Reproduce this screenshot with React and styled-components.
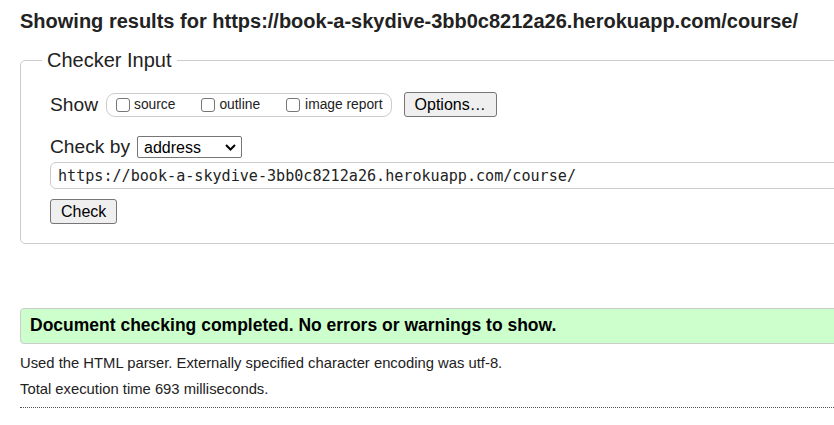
import React from 'react';
import styled, { createGlobalStyle } from 'styled-components';

const GlobalStyle = createGlobalStyle`
    html, body {
        margin: 0;
        padding: 0;
        background: #fff;
        overflow: hidden;
    }
    body {
        font-family: "Liberation Sans", Arial, sans-serif;
        color: #222;
    }
`;

const Page = styled.main`
    width: 1100px;
    padding: 9px 0 0 20px;
`;

const Heading = styled.h2`
    margin: 0;
    font-size: 20px;
    line-height: 24px;
    font-weight: bold;
`;

const Fieldset = styled.fieldset`
    margin: 15px 0 0 0;
    padding: 0 0 0 21px;
    border: 1px solid #ccc;
    border-radius: 5px;
    min-width: 0;
`;

const Legend = styled.legend`
    padding: 0 5px;
    font-size: 20px;
    line-height: 24px;
`;

const FieldsetBody = styled.div`
    padding: 20px 0 19px 8px;
`;

const Row = styled.div`
    display: flex;
    align-items: center;
    height: ${p => p.$h}px;
    margin-top: ${p => p.$top || 0}px;
`;

const Label = styled.span`
    font-size: 19.2px;
    line-height: ${p => p.$h}px;
    margin-right: ${p => p.$gap}px;
`;

const OptionGroup = styled.div`
    display: flex;
    align-items: center;
    gap: 26px;
    height: 22px;
    padding: 0 8px 0 9px;
    border: 1px solid #ccc;
    border-radius: 9px;
`;

const Option = styled.label`
    display: flex;
    align-items: center;
    gap: ${p => p.$gap}px;
    font-size: 13.8px;
    line-height: 16px;
`;

const Box = styled.input`
    appearance: none;
    margin: 0;
    width: 14px;
    height: 14px;
    border: 1px solid #767676;
    border-radius: 3px;
    background: #fff;
    box-sizing: border-box;
`;

const Button = styled.button`
    height: 25px;
    margin-left: ${p => p.$left || 0}px;
    margin-top: ${p => p.$top || 0}px;
    padding: 0 10px;
    font-family: "Liberation Sans", Arial, sans-serif;
    font-size: 16px;
    color: #000;
    background: #efefef;
    border: 1px solid #767676;
    border-radius: 3px;
    display: block;
`;

const SelectWrap = styled.div`
    position: relative;
    width: 105px;
    height: 22px;
`;

const Select = styled.select`
    appearance: none;
    width: 100%;
    height: 100%;
    margin: 0;
    padding: 0 0 0 6px;
    box-sizing: border-box;
    font-family: "Liberation Sans", Arial, sans-serif;
    font-size: 16px;
    color: #000;
    background: #fff;
    border: 1px solid #767676;
    border-radius: 2px;
`;

const Chevron = styled.svg`
    position: absolute;
    left: 88px;
    top: 8px;
    pointer-events: none;
`;

const UrlInput = styled.input`
    display: block;
    box-sizing: border-box;
    width: 1000px;
    height: 27px;
    margin: 4px 0 0 0;
    padding: 0 0 0 7px;
    font-family: "DejaVu Sans Mono", "Liberation Mono", monospace;
    font-size: 15.1px;
    color: #222;
    background: #fff;
    border: 1px solid #ccc;
    border-radius: 6px;
    outline: none;
`;

const Success = styled.div`
    display: flex;
    align-items: center;
    box-sizing: border-box;
    height: 36px;
    margin-top: 64px;
    padding: 0 8px 2px 9px;
    background: #ccffcc;
    border: 1px solid #ccc;
    border-radius: 4px;
    font-size: 17.5px;
    font-weight: bold;
    color: #000;
`;

const Detail = styled.p`
    margin: ${p => p.$top}px 0 0 0;
    font-size: 14.8px;
    line-height: 16px;
`;

const Rule = styled.hr`
    margin: 10px 0 0 0;
    border: 0;
    border-top: 1px dotted #555;
    height: 0;
`;

const url = 'https://book-a-skydive-3bb0c8212a26.herokuapp.com/course/';

export default function App() {
    return (
        <>
            <GlobalStyle />
            <Page>
                <Heading>Showing results for {url}</Heading>
                <Fieldset>
                    <Legend>Checker Input</Legend>
                    <FieldsetBody>
                        <Row $h={25}>
                            <Label $h={25} $gap={8}>Show</Label>
                            <OptionGroup>
                                <Option $gap={4}><Box type="checkbox" />source</Option>
                                <Option $gap={4}><Box type="checkbox" />outline</Option>
                                <Option $gap={5}><Box type="checkbox" />image report</Option>
                            </OptionGroup>
                            <Button $left={12}>Options…</Button>
                        </Row>
                        <Row $h={22} $top={19}>
                            <Label $h={22} $gap={7}>Check by</Label>
                            <SelectWrap>
                                <Select defaultValue="address">
                                    <option value="address">address</option>
                                    <option value="upload">file upload</option>
                                    <option value="input">text input</option>
                                </Select>
                                <Chevron width="11" height="7" viewBox="0 0 11 7">
                                    <polyline points="1,1 5.5,5.5 10,1" fill="none" stroke="#000" strokeWidth="2" />
                                </Chevron>
                            </SelectWrap>
                        </Row>
                        <UrlInput type="url" defaultValue={url} readOnly />
                        <Button $top={10}>Check</Button>
                    </FieldsetBody>
                </Fieldset>
                <Success>Document checking completed. No errors or warnings to show.</Success>
                <Detail $top={11}>Used the HTML parser. Externally specified character encoding was utf-8.</Detail>
                <Detail $top={10}>Total execution time 693 milliseconds.</Detail>
                <Rule />
            </Page>
        </>
    );
}
